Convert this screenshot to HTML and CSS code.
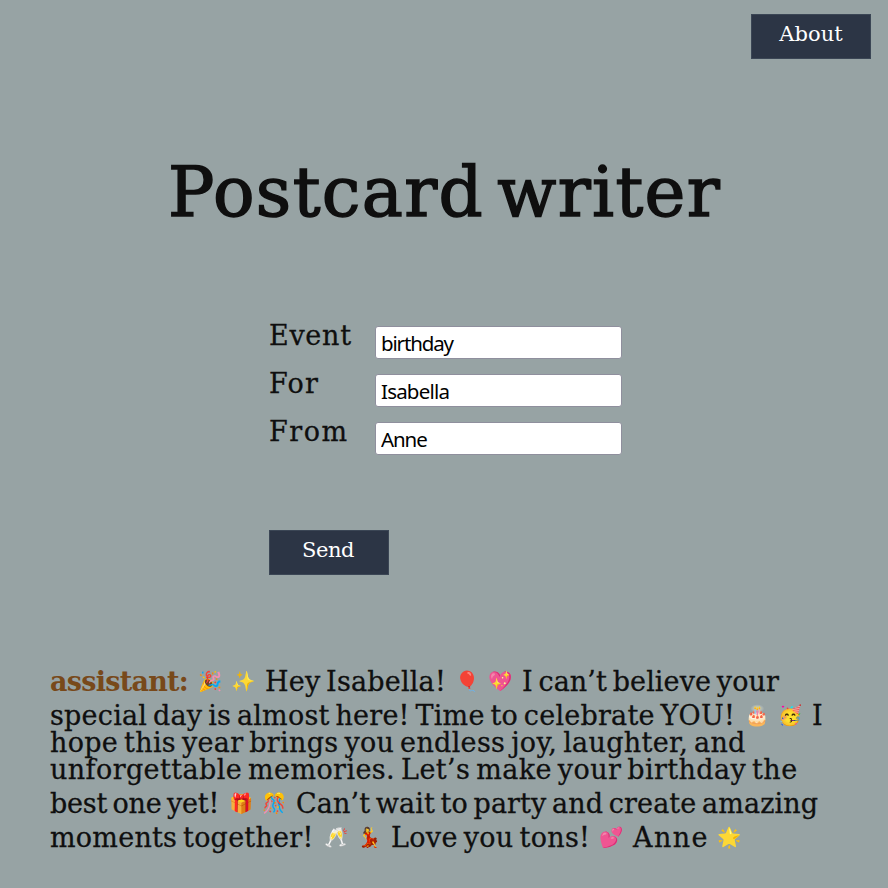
FILE: index.html
```html
<!DOCTYPE html>
<html lang="en">
<head>
<meta charset="utf-8">
<title>Postcard writer</title>
<link rel="stylesheet" href="styles.css">
</head>
<body>
<nav><button class="btn about" type="button">About</button></nav>
<main>
  <h1>Postcard writer</h1>
  <form>
    <div class="row"><label class="l-event" for="event">Event</label><input class="i-event" id="event" value="birthday"></div>
    <div class="row"><label class="l-for" for="for">For</label><input class="i-for" id="for" value="Isabella"></div>
    <div class="row"><label class="l-from" for="from">From</label><input class="i-from" id="from" value="Anne"></div>
    <button class="btn send" type="button">Send</button>
  </form>
  <section class="message">
    <div class="line tall"><strong class="s1">assistant:</strong><i>🎉</i><i>✨</i><span class="s2">Hey Isabella!</span><i>🎈</i><i>💖</i><span class="s3">I can’t believe your</span></div>
    <div class="line tall"><span class="s4">special day is almost here! Time to celebrate YOU!</span><i>🎂</i><i>🥳</i><span>I</span></div>
    <div class="line"><span class="s5">hope this year brings you endless joy, laughter, and</span></div>
    <div class="line"><span class="s6">unforgettable memories. Let’s make your birthday the</span></div>
    <div class="line tall"><span class="s7">best one yet!</span><i>🎁</i><i>🎊</i><span class="s8">Can’t wait to party and create amazing</span></div>
    <div class="line tall"><span class="s9">moments together!</span><i>🥂</i><i>💃</i><span class="s10">Love you tons!</span><i>💕</i><span class="s11">Anne</span><i>🌟</i></div>
  </section>
</main>
</body>
</html>
```
FILE: styles.css
```css
* { box-sizing: border-box; }

body {
  margin: 0;
  height: 888px;
  overflow: hidden;
  background: #97a3a4;
  color: #0f0f0f;
  font-family: "DejaVu Serif", serif;
}

nav {
  display: flex;
  justify-content: flex-end;
  padding: 14px 17px 0 0;
}

.btn {
  width: 120px;
  height: 45px;
  margin: 0;
  padding: 0 0 5px;
  border: 1px solid #3b4655;
  background: #2c3545;
  color: #fff;
  font: 21px/38px "DejaVu Serif", serif;
}
.about { letter-spacing: 0.1px; }
.send { margin-top: 60px; padding-right: 2px; letter-spacing: -0.4px; }

h1 {
  margin: 90px 0 0;
  padding-left: 168px;
  font-size: 69px;
  font-weight: 400;
  line-height: 86px;
  letter-spacing: 1.35px;
  word-spacing: -10px;
  white-space: nowrap;
  -webkit-text-stroke: 1.5px #0f0f0f;
}

form { margin: 91px 0 0 269px; }

.row {
  display: flex;
  height: 48px;
}
.row label {
  width: 106px;
  font-size: 27px;
  line-height: 20px;
  -webkit-text-stroke: 0.3px #0f0f0f;
}
.l-event { letter-spacing: 0.7px; }
.l-for { letter-spacing: 1.2px; }
.l-from { letter-spacing: 1.5px; }

.row input {
  width: 247px;
  height: 33px;
  padding: 0 5px;
  border: 1px solid #8f8f9d;
  border-radius: 3px;
  background: #fff;
  color: #000;
  font: 20.5px "Noto Sans", sans-serif;
}
.i-event { letter-spacing: -1.15px; }
.i-for { letter-spacing: -0.8px; }
.i-from { letter-spacing: -1.1px; }

.message { margin: 86px 0 0 50px; }

.line {
  display: flex;
  align-items: flex-end;
  height: 27px;
  font-size: 27px;
  line-height: 27px;
  word-spacing: -3px;
  white-space: nowrap;
}
.line.tall { height: 34px; }

.line span, .line strong { flex: none; }
.line span { -webkit-text-stroke: 0.3px #0f0f0f; }
.line strong { color: #78491a; }
.line i {
  flex: none;
  width: 24px;
  margin-right: 9px;
  font: 19.5px/26px "Noto Color Emoji", sans-serif;
}
.line i + span { margin-left: 1px; }

.s1 { width: 148px; letter-spacing: -0.74px; }
.s2 { width: 190px; letter-spacing: 0.19px; }
.s3 { letter-spacing: 0.1px; }
.s4 { width: 695px; letter-spacing: 0.23px; }
.s5 { letter-spacing: 0.31px; }
.s6 { letter-spacing: 0.4px; }
.s7 { width: 179px; letter-spacing: -0.2px; }
.s8 { letter-spacing: 0.1px; }
.s9 { width: 274px; letter-spacing: 0.24px; }
.s10 { width: 208px; letter-spacing: 0.33px; }
.s11 { width: 84px; letter-spacing: 1.4px; }
```
